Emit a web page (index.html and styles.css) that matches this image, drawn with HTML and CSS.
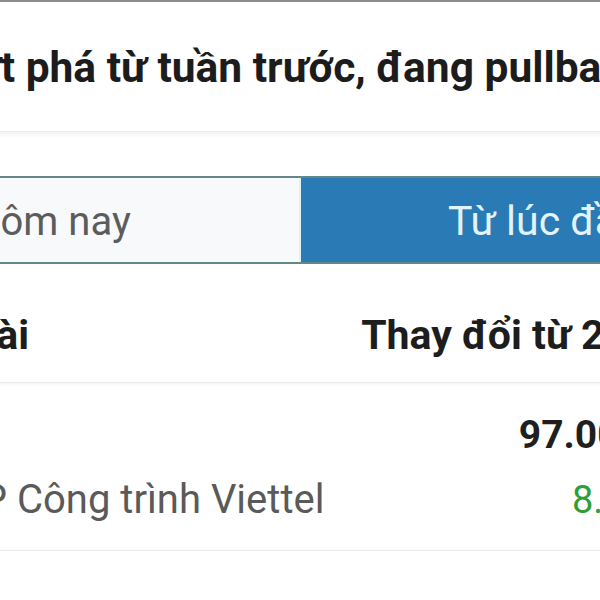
FILE: index.html
```html
<!DOCTYPE html>
<html lang="vi">
<head>
    <meta charset="UTF-8">
    <meta name="viewport" content="width=device-width, initial-scale=1.0">
    <title>Cổ phiếu nổi bật</title>
    <link rel="stylesheet" href="styles.css">
</head>
<body>

<div class="screen">
    <div class="topbar"></div>

    <div class="card">
        <p class="headline">bứt phá từ tuần trước, đang pullback</p>
    </div>

    <div class="tabs">
        <div class="tab">Hôm nay</div>
        <div class="tab active">Từ lúc đầu năm</div>
    </div>

    <div class="table">
        <div class="row head">
            <div class="cell">Mã Tài</div>
            <div class="cell right">Thay đổi từ 24h</div>
        </div>
        <div class="row">
            <div class="cell">
                <div class="ticker">CTR</div>
                <div class="name">CTCP Công trình Viettel</div>
            </div>
            <div class="cell right">
                <div class="price">97.000</div>
                <div class="change up">8.51</div>
            </div>
        </div>
    </div>
</div>

</body>
</html>
```

FILE: styles.css
```css
body {
    margin: 0;
    padding: 0;
    background: #fff;
    font-family: Roboto, "Noto Sans", sans-serif;
    overflow: hidden;
    width: 600px;
    height: 600px;
}
.screen {
    width: 757px;
    margin-left: -100px;
}
.topbar {
    height: 2px;
    background: #8c8c8c;
}
.card {
    padding: 41px 0 38px 51px;
    border-bottom: 1px solid #ececec;
    box-shadow: 0 3px 4px rgba(0, 0, 0, 0.05);
}
.headline {
    margin: 0;
    font-size: 42.5px;
    line-height: 50px;
    font-weight: 700;
    color: #1c1c1c;
    white-space: nowrap;
}
.tabs {
    display: grid;
    grid-template-columns: 401px 1fr;
    margin-top: 44px;
    border-top: 2px solid #62888a;
    border-bottom: 2px solid #62888a;
}
.tab {
    padding: 3px 0 0 72px;
    line-height: 81px;
    font-size: 40px;
    color: #5c5c5c;
    background: #f7f9fa;
    border-right: 2px solid #dcf3f7;
    white-space: nowrap;
}
.tab.active {
    padding-left: 147px;
    font-size: 41px;
    background: #2a7bb5;
    color: #e2f4fb;
    border-right: none;
}
.table {
    padding: 0 6px 0 7px;
}
.row {
    display: flex;
    justify-content: space-between;
    padding: 29px 0 27px;
    border-bottom: 1px solid #ebebeb;
    white-space: nowrap;
}
.row.head {
    padding: 48px 0 24px;
    font-size: 41px;
    line-height: 46px;
    font-weight: 700;
    color: #1d1d1d;
    box-shadow: 0 2px 3px rgba(0, 0, 0, 0.04);
}
.cell.right {
    text-align: right;
}
.ticker, .price {
    font-size: 39px;
    line-height: 46px;
    font-weight: 700;
    color: #1f1f1f;
}
.price {
    margin-right: 9px;
}
.name, .change {
    margin-top: 19px;
    font-size: 40px;
    line-height: 46px;
    color: #5a5a5a;
}
.change.up {
    margin-right: 5px;
    font-size: 38px;
    color: #2e9e35;
}
```
